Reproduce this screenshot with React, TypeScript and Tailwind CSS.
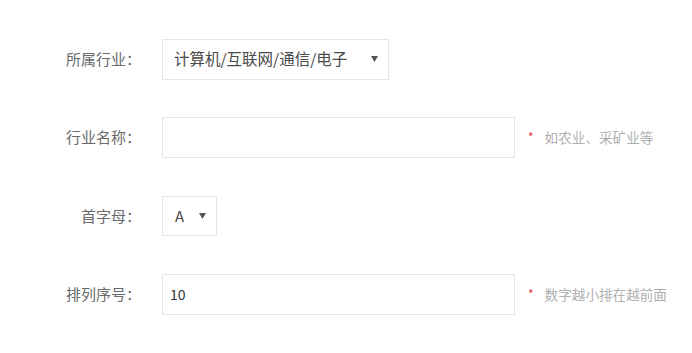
const font = { fontFamily: '"Noto Sans CJK SC", "Liberation Sans", sans-serif' };

function Caret() {
  return (
    <svg width="7" height="6" viewBox="0 0 7 6" className="shrink-0">
      <path d="M0 0h7L3.5 6z" fill="#555" />
    </svg>
  );
}

function Row({ label, children }: { label: string; children: React.ReactNode }) {
  return (
    <div className="flex h-[40px] items-center">
      <div className="w-[143px] shrink-0 pr-[2px] text-right text-[15px] text-[#6a6a6a]">{label}</div>
      <div className="ml-[19px] flex h-full items-center">{children}</div>
    </div>
  );
}

function Hint({ text }: { text: string }) {
  return (
    <div className="ml-[13px] flex items-center">
      <span className="text-[12px] leading-none text-[#e4393c]">*</span>
      <span className="ml-[11px] text-[13.6px] text-[#b0b0b0]">{text}</span>
    </div>
  );
}

export default function App() {
  return (
    <div className="min-h-[353px] w-[692px] bg-white" style={font}>
      <div className="flex flex-col gap-[38.5px] pt-[39px]">
        <Row label="所属行业：">
          <div className="flex h-[41px] w-[227px] items-center justify-between border border-[#e3e6e8] pl-[11px] pr-[10px] text-[15.5px] text-[#4a4a4a]">
            <span>计算机/互联网/通信/电子</span>
            <Caret />
          </div>
        </Row>
        <Row label="行业名称：">
          <div className="h-[41px] w-[353px] border border-[#e3e6e8]" />
          <Hint text="如农业、采矿业等" />
        </Row>
        <Row label="首字母：">
          <div className="flex h-[40px] w-[55px] items-center justify-between border border-[#e3e6e8] pl-[12px] pr-[10px] text-[15px] text-[#4a4a4a]">
            <span>A</span>
            <Caret />
          </div>
        </Row>
        <Row label="排列序号：">
          <div className="flex h-[41px] w-[353px] items-center border border-[#e3e6e8] pl-[7px] text-[14px] text-[#333]">
            10
          </div>
          <Hint text="数字越小排在越前面" />
        </Row>
      </div>
    </div>
  );
}
